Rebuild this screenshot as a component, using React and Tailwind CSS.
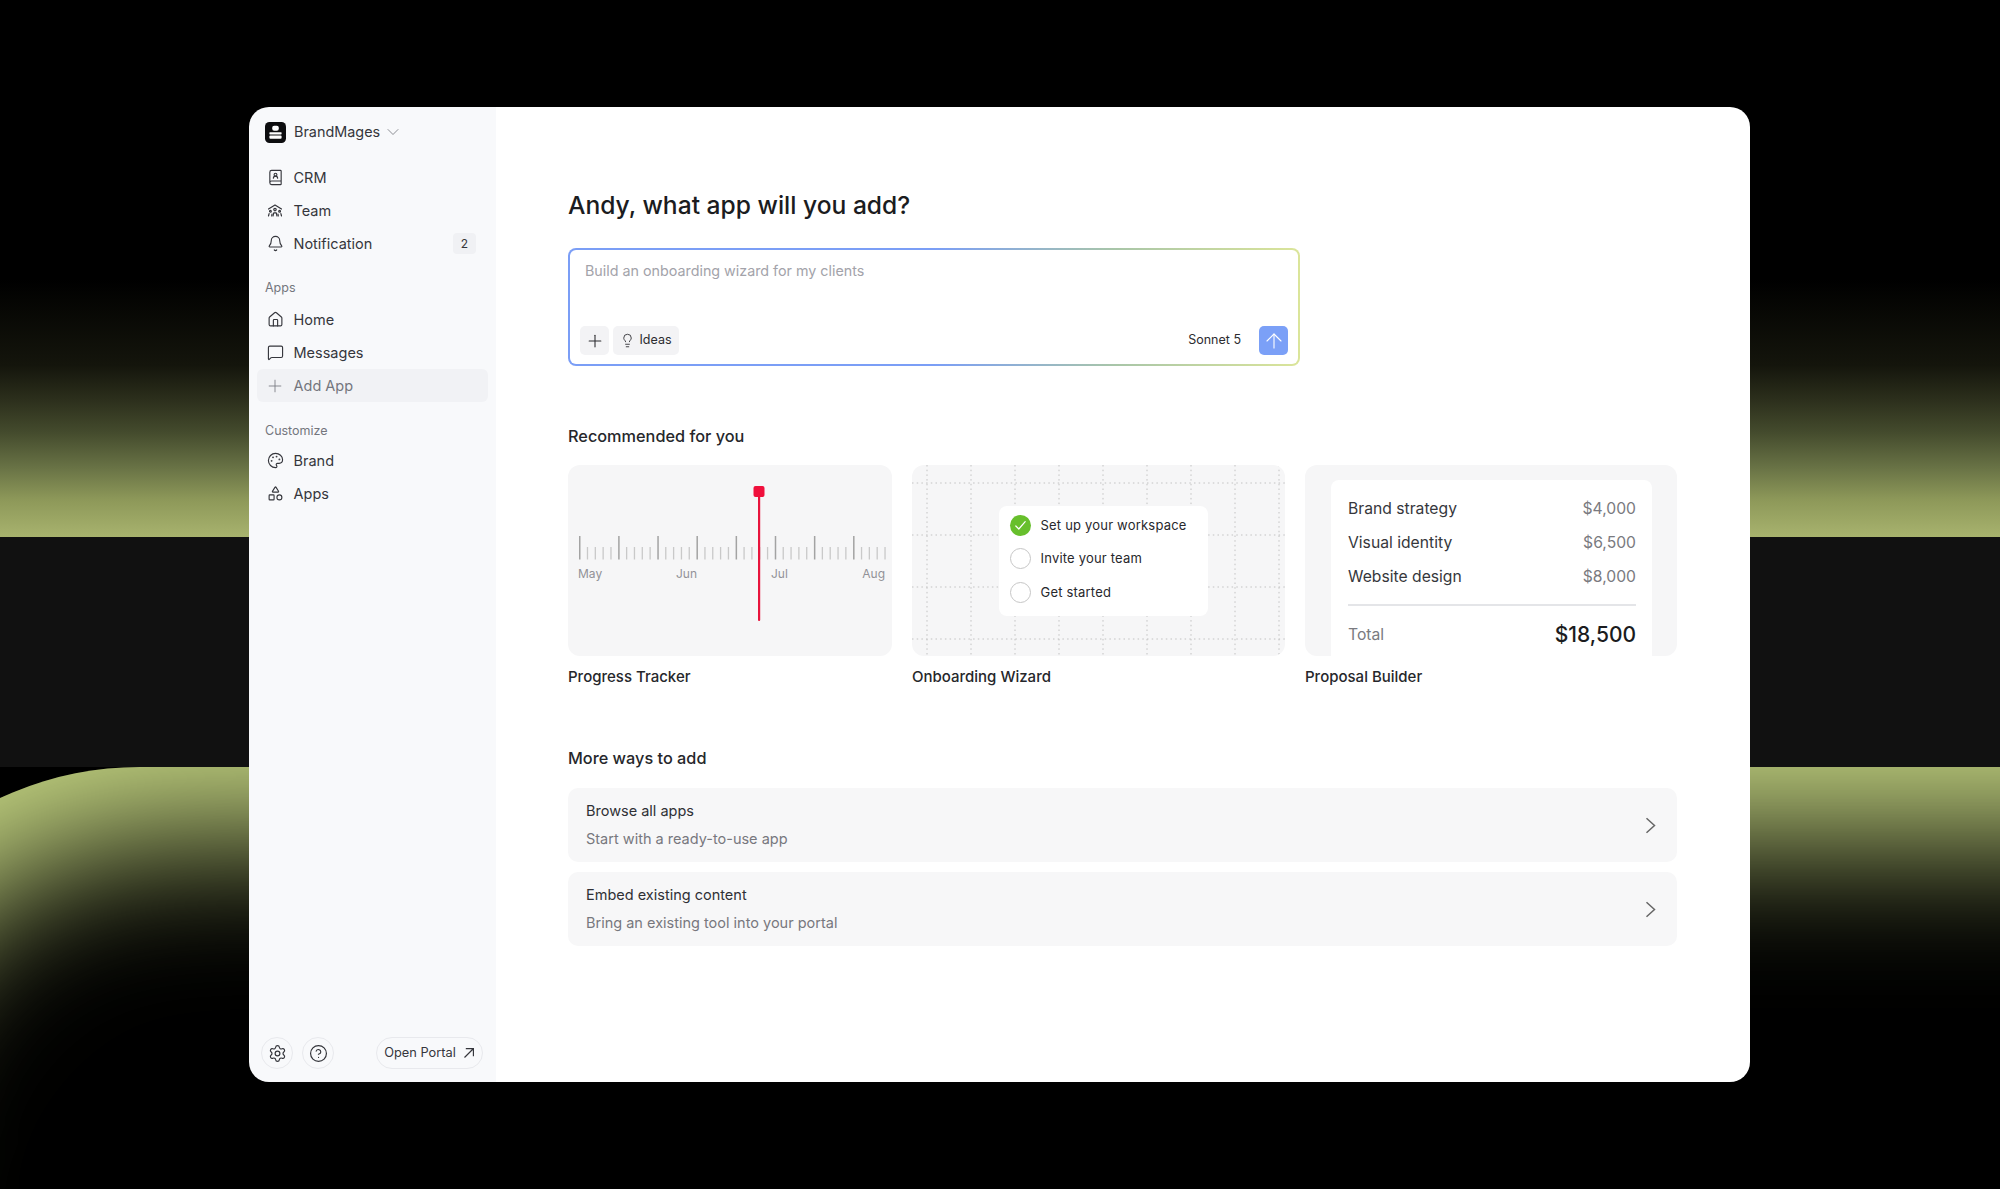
import React from "react";
import { BookUser, Bell, House, MessageSquare, Plus, Palette, Shapes, Settings, CircleHelp, ChevronDown, Lightbulb, ArrowUp } from "lucide-react";

const F = { fontFamily: "Inter, 'Liberation Sans', sans-serif" };

function TeamIcon() {
  return (
    <svg width="16" height="16" viewBox="0 0 16 16" fill="none" stroke="currentColor" strokeWidth="1.2" strokeLinecap="round" strokeLinejoin="round">
      <path d="M1.5 6 8 2l6.5 4" />
      <circle cx="8" cy="6.6" r="1.2" />
      <path d="M6 13l.7-3.2h2.6L10 13" />
      <circle cx="3.4" cy="8.3" r="0.9" />
      <path d="M1.5 13l.6-2.4M5 11l-.3 2" />
      <circle cx="12.6" cy="8.3" r="0.9" />
      <path d="M14.5 13l-.6-2.4M11 11l.3 2" />
    </svg>
  );
}

function Row({ icon, label, badge, muted }) {
  return (
    <div className={`h-[33px] flex items-center rounded-md pl-[8px] pr-[12px] ${muted ? "bg-[#f1f2f5] text-[#74767d]" : "text-[#35363c]"}`}>
      <span className="w-[20px] flex justify-center">{icon}</span>
      <span className="ml-[8.5px] text-[14.5px]">{label}</span>
      {badge && <span className="ml-auto w-[23px] h-[21px] rounded bg-[#f0f1f4] text-[12px] flex items-center justify-center">{badge}</span>}
    </div>
  );
}

function Sidebar() {
  const ic = { size: 17, strokeWidth: 1.6 };
  return (
    <aside className="w-[247px] shrink-0 bg-[#f8f9fb] flex flex-col px-[8px]">
      <div className="h-[50px] flex items-center pl-[8px]">
        <svg width="21" height="21" viewBox="0 0 21 21">
          <rect width="21" height="21" rx="4.5" fill="#0d0d0f" />
          <rect x="7.2" y="3.8" width="6.6" height="5" rx="2" fill="#fff" />
          <rect x="4.4" y="10.2" width="12.2" height="2.2" rx="0.6" fill="#fff" />
          <rect x="4.4" y="13.6" width="12.2" height="3.2" rx="1" fill="#fff" />
        </svg>
        <span className="ml-[8px] text-[14.4px] text-[#35363c]">BrandMages</span>
        <ChevronDown size={20} strokeWidth={1} className="ml-[3px] text-[#77797f]" />
      </div>
      <div className="mt-[4px] flex flex-col">
        <Row icon={<BookUser {...ic} />} label="CRM" />
        <Row icon={<TeamIcon />} label="Team" />
        <Row icon={<Bell {...ic} />} label="Notification" badge="2" />
      </div>
      <div className="mt-[18px] h-[20px] pl-[8px] flex items-center text-[12.5px] text-[#74767d]">Apps</div>
      <div className="mt-[5px] flex flex-col">
        <Row icon={<House {...ic} />} label="Home" />
        <Row icon={<MessageSquare {...ic} />} label="Messages" />
        <Row icon={<Plus size={20} strokeWidth={1} />} label="Add App" muted />
      </div>
      <div className="mt-[19px] h-[20px] pl-[8px] flex items-center text-[12.5px] text-[#74767d]">Customize</div>
      <div className="mt-[3px] flex flex-col">
        <Row icon={<Palette {...ic} />} label="Brand" />
        <Row icon={<Shapes {...ic} />} label="Apps" />
      </div>
      <div className="mt-auto mb-[13px] flex items-center text-[#35363c]">
        <button className="ml-[4px] w-[32px] h-[32px] rounded-full border border-[#e8e9ed] flex items-center justify-center"><Settings size={19} strokeWidth={1.5} /></button>
        <button className="ml-[9px] w-[32px] h-[32px] rounded-full border border-[#e8e9ed] flex items-center justify-center"><CircleHelp size={19} strokeWidth={1.5} /></button>
        <button className="ml-auto mr-[5px] w-[107px] h-[32px] rounded-full border border-[#e8e9ed] flex items-center justify-center gap-[7px] text-[12.8px]">
          Open Portal
          <svg width="12" height="12" viewBox="0 0 12 12" fill="none" stroke="currentColor" strokeWidth="1.15"><path d="M1.5 10.5 10 2M2.8 1.6h7.6v7.6" /></svg>
        </button>
      </div>
    </aside>
  );
}

function Composer() {
  return (
    <div className="w-[732px] h-[118px] rounded-[8px] p-[2px] bg-[linear-gradient(90deg,#7b9ef6_0%,#7b9ef6_50%,#a9c6a8_75%,#dbe59a_100%)]">
      <div className="h-full rounded-[6px] bg-white flex flex-col pl-[10px] pr-[10px] pb-[9px]">
        <div className="mt-[11px] h-[20px] pl-[5px] flex items-center text-[14.3px] text-[#a3a3aa]">Build an onboarding wizard for my clients</div>
        <div className="mt-auto flex items-center">
          <button className="w-[29px] h-[29px] rounded-[5px] bg-[#f3f3f5] flex items-center justify-center text-[#2c2c30]"><Plus size={20} strokeWidth={1.3} /></button>
          <button className="ml-[4px] w-[66px] h-[29px] rounded-[5px] bg-[#f3f3f5] flex items-center justify-center gap-[4px] text-[12.5px] text-[#2c2c30]"><Lightbulb size={15} strokeWidth={1.4} /> Ideas</button>
          <span className="ml-auto text-[12.5px] text-[#2c2c30]">Sonnet 5</span>
          <button className="ml-[18px] w-[29px] h-[29px] rounded-[5px] bg-[#7ba0f7] flex items-center justify-center text-white"><ArrowUp size={24} strokeWidth={1.1} /></button>
        </div>
      </div>
    </div>
  );
}

function Ruler() {
  const ticks = [];
  for (let i = 0; i < 40; i++) {
    const major = i % 5 === 0;
    const x = 11 + i * 7.83;
    ticks.push(<rect key={i} x={x} y={major ? 71 : 82} width={major ? 1.5 : 1.3} height={major ? 23.5 : 12.5} fill={major ? "#a3a3a3" : "#c9c9c9"} />);
  }
  return (
    <svg width="324" height="191" viewBox="0 0 324 191" className="block">
      {ticks}
      <rect x="190" y="21" width="2.2" height="135" rx="1" fill="#e8143c" />
      <rect x="185.5" y="21" width="11" height="11" rx="2" fill="#f0103c" />
    </svg>
  );
}

function DottedGrid() {
  const v = [0, 1, 2, 3, 4, 5, 6, 7, 8].map((i) => 15 + i * 44);
  const h = [0, 1, 2, 3].map((i) => 18 + i * 52);
  return (
    <svg width="373" height="191" viewBox="0 0 373 191" className="block" stroke="#c2c2c2" strokeWidth="1" strokeDasharray="1.5 3.2">
      {v.map((x) => <line key={x} x1={x} y1="0" x2={x} y2="191" />)}
      {h.map((y) => <line key={y} x1="0" y1={y} x2="373" y2={y} />)}
    </svg>
  );
}

function Step({ label, done }) {
  return (
    <div className="h-[33.5px] flex items-center">
      {done ? (
        <span className="w-[21px] h-[21px] rounded-full bg-[#67bf2c] flex items-center justify-center">
          <svg width="13" height="13" viewBox="0 0 13 13" fill="none" stroke="#fff" strokeWidth="1.2" strokeLinecap="round" strokeLinejoin="round"><path d="M1.8 7l3 3 6.4-7.4" /></svg>
        </span>
      ) : (
        <span className="w-[21px] h-[21px] rounded-full border-[1.5px] border-[#c6c6c6]" />
      )}
      <span className="ml-[10px] text-[13px] tracking-[0.2px] text-[#28282c]">{label}</span>
    </div>
  );
}

function LineItem({ label, value }) {
  return (
    <div className="h-[34px] flex items-center justify-between text-[15.7px]">
      <span className="text-[#36373c]">{label}</span>
      <span className="text-[#7a7a80]">{value}</span>
    </div>
  );
}

function CardLabel({ children }) {
  return <div className="mt-[11px] h-[20px] flex items-center text-[15px] font-[450] text-[#26272b]">{children}</div>;
}

function Way({ title, sub }) {
  return (
    <div className="h-[74px] rounded-[10px] bg-[#f7f7f8] flex items-center pl-[18px] pr-[21px]">
      <div className="flex flex-col">
        <div className="text-[14.5px] leading-[20px] text-[#2f3035]">{title}</div>
        <div className="mt-[8px] text-[14.5px] leading-[20px] text-[#77787e]">{sub}</div>
      </div>
      <svg className="ml-auto" width="11" height="17" viewBox="0 0 11 17" fill="none" stroke="#666" strokeWidth="1.5"><path d="M1.5 1.2 9.5 8.5l-8 7.3" /></svg>
    </div>
  );
}

const Tick = ({ className, children }) => (
  <span className={`absolute top-[101px] text-[12px] leading-[16px] text-[#929297] ${className}`}>{children}</span>
);

function Main() {
  return (
    <main className="flex-1 bg-white pl-[72px] pr-[73px]">
      <h1 className="mt-[80px] h-[36px] flex items-center text-[24.6px] font-[450] text-[#1b1c20]">Andy, what app will you add?</h1>
      <div className="mt-[25px]"><Composer /></div>
      <h2 className="mt-[58px] h-[24px] flex items-center text-[16.3px] font-[450] text-[#26272b]">Recommended for you</h2>
      <div className="mt-[17px] grid grid-cols-[324px_373px_372px] gap-x-[20px]">
        <div>
          <div className="relative h-[191px] rounded-[12px] bg-[#f6f6f7] overflow-hidden">
            <Ruler />
            <Tick className="left-[10px]">May</Tick>
            <Tick className="left-[108px]">Jun</Tick>
            <Tick className="left-[203px]">Jul</Tick>
            <Tick className="right-[7px]">Aug</Tick>
          </div>
          <CardLabel>Progress Tracker</CardLabel>
        </div>
        <div>
          <div className="relative h-[191px] rounded-[12px] bg-[#f6f6f7] overflow-hidden">
            <DottedGrid />
            <div className="absolute left-[87px] top-[41px] w-[209px] h-[110px] rounded-[8px] bg-white pl-[10.5px] pt-[2.5px]">
              <Step label="Set up your workspace" done />
              <Step label="Invite your team" />
              <Step label="Get started" />
            </div>
          </div>
          <CardLabel>Onboarding Wizard</CardLabel>
        </div>
        <div>
          <div className="h-[191px] rounded-[12px] bg-[#f6f6f7] overflow-hidden pt-[15px] pl-[26px] pr-[25px]">
            <div className="h-[176px] rounded-t-[8px] bg-white pl-[17px] pr-[16px] pt-[12px]">
              <LineItem label="Brand strategy" value="$4,000" />
              <LineItem label="Visual identity" value="$6,500" />
              <LineItem label="Website design" value="$8,000" />
              <div className="mt-[10px] h-[1.5px] bg-[#e4e5e8]" />
              <div className="mt-[12px] h-[34px] flex items-center justify-between">
                <span className="text-[15.7px] text-[#7a7a80]">Total</span>
                <span className="text-[21px] font-[450] text-[#1b1c20]">$18,500</span>
              </div>
            </div>
          </div>
          <CardLabel>Proposal Builder</CardLabel>
        </div>
      </div>
      <h2 className="mt-[59px] h-[24px] flex items-center text-[16.3px] font-[450] text-[#26272b]">More ways to add</h2>
      <div className="mt-[18px] flex flex-col gap-[10px]">
        <Way title="Browse all apps" sub="Start with a ready-to-use app" />
        <Way title="Embed existing content" sub="Bring an existing tool into your portal" />
      </div>
    </main>
  );
}

export default function App() {
  return (
    <div style={F} className="relative w-[2000px] h-[1189px] bg-black overflow-hidden">
      <div className="h-[537px] bg-[linear-gradient(180deg,#000_0%,#000_52%,#14150c_68%,#2c2f1c_74.5%,#444b2d_80.5%,#687245_87%,#8d9859_93%,#a8b36e_100%)]" />
      <div className="h-[230px] bg-[#111111]" />
      <div className="relative ml-[-191px] h-[422px] rounded-tl-[331px] overflow-hidden bg-[#bfcf7e]">
        <div className="absolute left-[40px] right-[-300px] top-[72px] h-[700px] rounded-tl-[331px] bg-black blur-[70px]" />
      </div>
      <div className="absolute left-[249px] top-[107px] w-[1501px] h-[975px] rounded-[20px] overflow-hidden flex">
        <Sidebar />
        <Main />
      </div>
    </div>
  );
}
